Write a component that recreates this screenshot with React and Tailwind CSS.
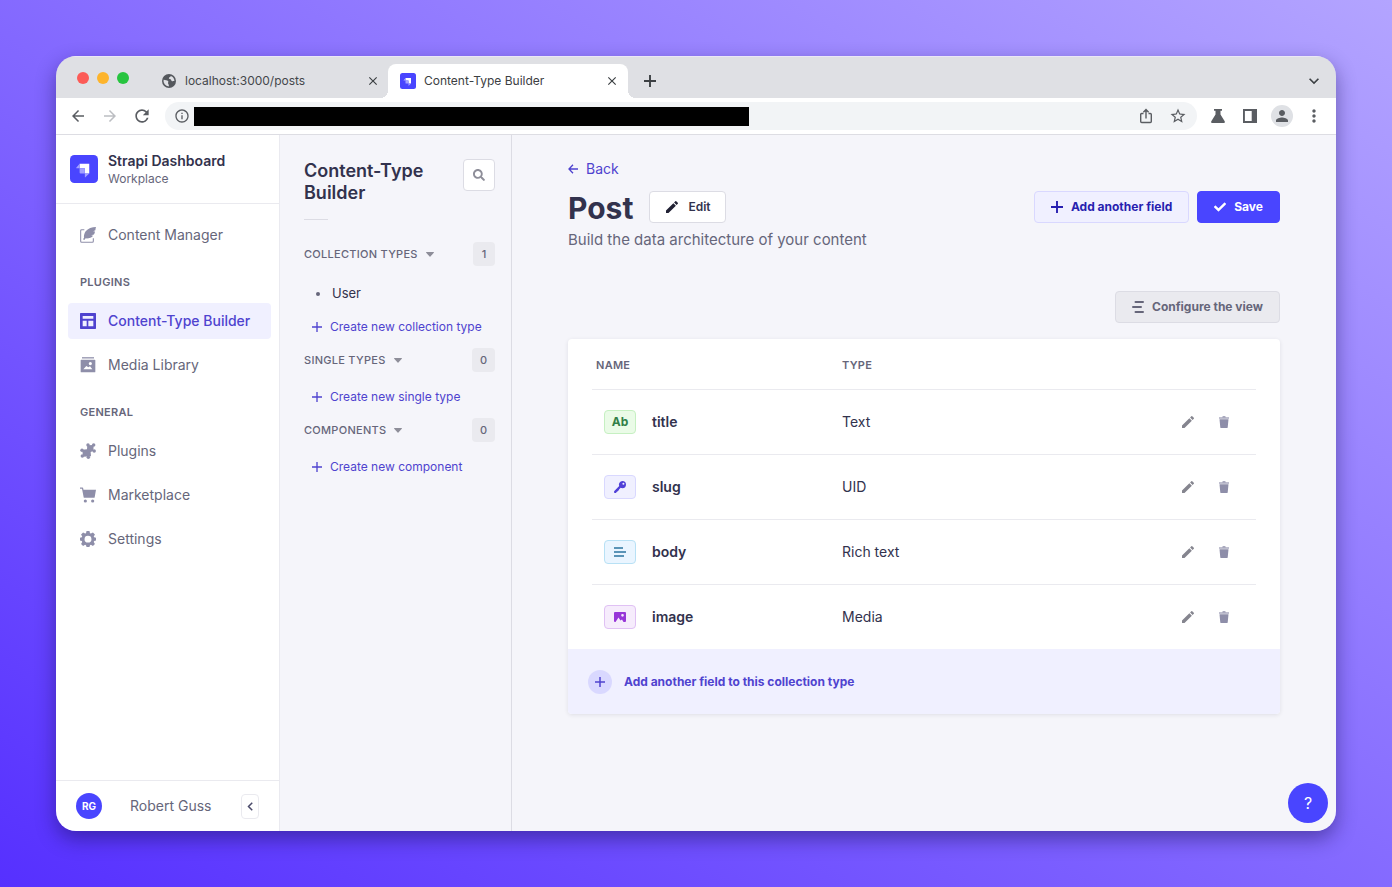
import React from "react";
import {
  MdArrowBack,
  MdArrowForward,
  MdRefresh,
  MdInfoOutline,
  MdStarBorder,
  MdPerson,
  MdMoreVert,
  MdEdit,
  MdClose,
  MdExpandMore,
} from "react-icons/md";
import { FaCheck, FaSearch } from "react-icons/fa";

function StrapiLogo({ className }) {
  return (
    <svg viewBox="0 0 32 32" className={className} aria-hidden="true">
      <rect width="32" height="32" rx="5" fill="#4945ff" />
      <path d="M11 10h11v11h-5v-5.500a.5.500 0 0 0-.5-.5H11z" fill="#fff" />
      <path d="M11 10v5H7.300a.3.300 0 0 1-.2-.5z" fill="#a3a1ff" />
      <path d="M11 15h5.500a.5.500 0 0 1 .5.500V21h-5a1 1 0 0 1-1-1z" fill="#a3a1ff" />
      <path d="M17 21h5l-4.500 4.500a.3.300 0 0 1-.5-.2z" fill="#a3a1ff" />
    </svg>
  );
}

function GlobeIcon() {
  return (
    <svg viewBox="0 0 16 16" className="size-4 text-[#55585d]" aria-hidden="true">
      <circle cx="8" cy="8" r="7" fill="currentColor" />
      <path d="M2.600 6.800c1.800.2 3.600.3 4.600 1.500.5.8-.3 1.300-.2 2 .1.900 1.200 1.200.8 3.100A5.500 5.500 0 0 1 2.600 6.800z" fill="#dfe0e4" />
      <path d="M9.800 2.900c-.3 1.200-1.600 1-1.900 1.900-.3.800.5 1.300 1.500 1.500.9.300.7 1.500 1.600 1.900.8.300 1.700-.2 2.400-.1a5.500 5.500 0 0 0-3.600-5.200z" fill="#dfe0e4" />
    </svg>
  );
}

function FeatherIcon() {
  return (
    <svg viewBox="0 0 24 24" className="size-4" fill="currentColor" aria-hidden="true">
      <path d="M24 0c-6 .3-12 2-15.500 6.500C6.500 9.500 5.500 13 6 16l-1.500 2.500 2 1L8.500 17c4.500.4 9-1 11.200-4l-3-.6 4.300-1.200c.8-1.500 1.300-3 1.500-4.400l-2.800-.4 3.400-1.400C23 3.500 23.500 1.700 24 0z" />
      <path d="M6.500 4H2.500A1.500 1.500 0 0 0 1 5.500v16A1.500 1.500 0 0 0 2.500 23h16a1.500 1.500 0 0 0 1.500-1.500V17" fill="none" stroke="currentColor" strokeWidth="1.600" />
    </svg>
  );
}

function LayoutIcon() {
  return (
    <svg viewBox="0 0 24 24" className="size-4" aria-hidden="true">
      <path fillRule="evenodd" fill="currentColor" d="M1 0h22a1 1 0 0 1 1 1v22a1 1 0 0 1-1 1H1a1 1 0 0 1-1-1V1a1 1 0 0 1 1-1zm3 4.500v4.200h16V4.500zm0 7.200V20h6v-8.300zm8.500 0V20H20v-8.300z" />
    </svg>
  );
}

function LibraryIcon() {
  return (
    <svg viewBox="0 0 24 24" className="size-4" aria-hidden="true">
      <path fill="currentColor" d="M3 .3h18v1.900H3z" />
      <path fillRule="evenodd" fill="currentColor" d="M2 4h20a1 1 0 0 1 1 1v17a1 1 0 0 1-1 1H2a1 1 0 0 1-1-1V5a1 1 0 0 1 1-1zM15.500 7.500a2.400 2.400 0 1 0 0 4.800 2.400 2.400 0 0 0 0-4.800zM5 18.500h13.500L15 14l-2.500 1.500-3-2z" />
    </svg>
  );
}

function PuzzleIcon() {
  return (
    <svg viewBox="0 0 24 24" className="size-4" fill="currentColor" aria-hidden="true">
      <path d="M11 3.500 20.500 3l-.5 9-4 1.500.5 6.500-11.500.5L4 16l-.5-6 7-.5z" />
      <circle cx="12" cy="3" r="2.600" />
      <circle cx="20.500" cy="3" r="2.600" />
      <circle cx="21.300" cy="12" r="2.600" />
      <circle cx="3" cy="11" r="2.600" />
      <circle cx="3.500" cy="19.500" r="2.600" />
      <circle cx="12.500" cy="21.300" r="2.600" />
    </svg>
  );
}

function CartIcon() {
  return (
    <svg viewBox="0 0 24 24" className="size-4" fill="currentColor" aria-hidden="true">
      <path d="M0 .8h3.700a1 1 0 0 1 1 .8L5.200 4H24l-2 11.500a1 1 0 0 1-1 .8H6.500a1 1 0 0 1-1-.8L3 2.800H0z" />
      <circle cx="8" cy="21" r="2.400" />
      <circle cx="19" cy="21" r="2.400" />
    </svg>
  );
}

function CogIcon() {
  return (
    <svg viewBox="0 0 24 24" className="size-4" aria-hidden="true">
      <path fillRule="evenodd" fill="currentColor" d="M9.800 0h4.400l.8 3.300 1.400.6 3-1.800 3 3-1.800 3 .6 1.300 2.800.8v4l-2.800.9-.6 1.400 1.800 3-3 3-3-1.800-1.400.6-.8 2.700H9.800L9 21.300l-1.400-.6-3 1.800-3-3 1.700-3-.5-1.400-2.800-.9v-4l2.800-.8.5-1.300-1.700-3 3-3 3 1.800L9 3.300zM12 7a5.200 5.200 0 1 0 0 10.400A5.200 5.200 0 0 0 12 7z" />
    </svg>
  );
}

function TrashIcon() {
  return (
    <svg viewBox="0 0 24 24" className="size-3" fill="currentColor" aria-hidden="true">
      <path d="M2 2.500h6.500L9.500 0h5l1 2.500H22v3H2z" opacity=".75" />
      <path d="M3 6.500h18l-1.600 16.500a1 1 0 0 1-1 .9H5.600a1 1 0 0 1-1-.9z" />
    </svg>
  );
}

function KeyIcon() {
  return (
    <svg viewBox="0 0 24 24" className="size-3" aria-hidden="true">
      <path fillRule="evenodd" fill="currentColor" d="M16.800 0a7.200 7.200 0 0 1 0 14.400c-1.300 0-2.400-.3-3.400-.9L10 17l.3 1.400-2 .5-.3 1.700-1.800.3-2 2.500c-1.200 1-3.200.7-4-.5v-2.300L10.400 10A7.200 7.200 0 0 1 16.800 0zm2 3.300a2 2 0 1 0 0 4 2 2 0 0 0 0-4z" />
    </svg>
  );
}

function ParagraphIcon() {
  return (
    <svg viewBox="0 0 24 24" className="size-3" fill="none" stroke="currentColor" strokeWidth="3.400" aria-hidden="true">
      <path d="M0 4h18M0 12h24M0 20h20" />
    </svg>
  );
}

function PictureIcon() {
  return (
    <svg viewBox="0 0 24 24" className="size-3" aria-hidden="true">
      <path fillRule="evenodd" fill="currentColor" d="M2 2h20a2 2 0 0 1 2 2v16a2 2 0 0 1-2 2h-3l-3-5-3 2-4-6-6 9H2a2 2 0 0 1-2-2V4a2 2 0 0 1 2-2zm15 4a2.700 2.700 0 1 0 0 5.400A2.700 2.700 0 0 0 17 6z" />
    </svg>
  );
}

function ConfigureIcon() {
  return (
    <svg viewBox="0 0 12 12" className="size-3" fill="none" stroke="currentColor" strokeWidth="2" strokeLinecap="round" aria-hidden="true">
      <path d="M3.500 1H11M1 6h8M3.500 11H11" />
    </svg>
  );
}

function Plus({ className, weight }) {
  return (
    <svg viewBox="0 0 12 12" className={className} fill="none" stroke="currentColor" strokeWidth={weight} aria-hidden="true">
      <path d="M6 0v12M0 6h12" />
    </svg>
  );
}

function CaretIcon() {
  return (
    <svg viewBox="0 0 8 5" className="h-[5px] w-2 text-[#8e8e99]" fill="currentColor" aria-hidden="true">
      <path d="M.5 0h7a.4.400 0 0 1 .3.700L4.400 4.600a.5.500 0 0 1-.8 0L.2.700A.4.400 0 0 1 .5 0z" />
    </svg>
  );
}

function BackArrow() {
  return (
    <svg viewBox="0 0 12 12" className="size-[10px]" fill="none" stroke="currentColor" strokeWidth="1.600" aria-hidden="true">
      <path d="M12 6H1.500M6 1 1.200 6 6 11" />
    </svg>
  );
}

function ShareIcon() {
  return (
    <svg viewBox="0 0 16 16" className="size-4" fill="none" stroke="currentColor" strokeWidth="1.400" aria-hidden="true">
      <path d="M5.500 5.500H3.700a1 1 0 0 0-1 1v7a1 1 0 0 0 1 1h8.600a1 1 0 0 0 1-1v-7a1 1 0 0 0-1-1h-1.800M8 10.500V1.800M5.400 4.200 8 1.600l2.600 2.600" />
    </svg>
  );
}

function FlaskIcon() {
  return (
    <svg viewBox="0 0 16 16" className="size-4" fill="currentColor" aria-hidden="true">
      <path d="M4 1h8v1.800h-1.500V6.500l4.200 6.700c.5 1-.1 1.800-1 1.800H2.300c-.9 0-1.500-.8-1-1.800l4.200-6.700V2.800H4z" />
    </svg>
  );
}

function SidePanelIcon() {
  return (
    <svg viewBox="0 0 16 16" className="size-4" aria-hidden="true">
      <path fillRule="evenodd" fill="currentColor" d="M1 1h14v14H1zm1.900 1.900v10.200h6.800V2.900z" />
    </svg>
  );
}

function ChevronLeftIcon() {
  return (
    <svg viewBox="0 0 8 12" className="h-[9px] w-[6px]" fill="none" stroke="currentColor" strokeWidth="2" aria-hidden="true">
      <path d="M7 1 2 6l5 5" />
    </svg>
  );
}

function BrowserTabs() {
  return (
    <div className="flex h-[42px] items-end border-t border-[#ebe7f7] bg-[#dfe0e4] pr-3">
      <div className="flex h-[41px] w-[90px] items-center gap-2 pl-[21px]">
        <span className="size-3 rounded-full bg-[#fc5b57]" />
        <span className="size-3 rounded-full bg-[#fdb42c]" />
        <span className="size-3 rounded-full bg-[#27c43f]" />
      </div>
      <div className="flex h-[34px] w-[242px] items-center pr-2 pl-[15px] text-xs text-[#44474b]">
        <GlobeIcon />
        <span className="ml-2 flex-1">localhost:3000/posts</span>
        <button type="button" aria-label="Close tab" className="text-[#3c4043]">
          <MdClose className="size-[14px]" />
        </button>
      </div>
      <div className="relative flex h-[34px] w-[240px] items-center rounded-t-lg bg-white pr-[9px] pl-3 text-xs text-[#3c4043]">
        <span className="absolute bottom-0 -left-2 size-2 bg-[radial-gradient(circle_at_0_0,transparent_8px,white_8px)]" />
        <span className="absolute -right-2 bottom-0 size-2 bg-[radial-gradient(circle_at_100%_0,transparent_8px,white_8px)]" />
        <StrapiLogo className="size-4" />
        <span className="ml-2 flex-1">Content-Type Builder</span>
        <button type="button" aria-label="Close tab">
          <MdClose className="size-[14px]" />
        </button>
      </div>
      <button type="button" aria-label="New tab" className="flex h-[34px] w-11 items-center justify-center text-[#3c4043]">
        <Plus className="size-3" weight="1.900" />
      </button>
      <button type="button" aria-label="Search tabs" className="ml-auto flex h-[34px] items-center text-[#3c4043]">
        <MdExpandMore className="size-5" />
      </button>
    </div>
  );
}

function AddressBar() {
  return (
    <div className="flex h-[37px] items-center border-b border-[#dddde3] bg-white pr-[14px] pl-3 text-[#5a5d62]">
      <div className="flex w-[97px] items-center gap-3">
        <button type="button" aria-label="Back">
          <MdArrowBack className="size-5 p-px" />
        </button>
        <button type="button" aria-label="Forward" className="text-[#bcbec2]">
          <MdArrowForward className="size-5 p-px" />
        </button>
        <button type="button" aria-label="Reload">
          <MdRefresh className="size-5" />
        </button>
      </div>
      <div className="flex h-7 flex-1 items-center rounded-full bg-[#f2f4f6] pr-[10px] pl-[9px]">
        <MdInfoOutline className="size-4" />
        <input
          type="text"
          aria-label="Address"
          className="ml-1 h-[19px] w-[555px] min-w-0 bg-black px-1 text-xs text-black outline-none"
        />
        <div className="ml-auto flex items-center gap-[15px]">
          <button type="button" aria-label="Share">
            <ShareIcon />
          </button>
          <button type="button" aria-label="Bookmark">
            <MdStarBorder className="size-[18px]" />
          </button>
        </div>
      </div>
      <div className="ml-[13px] flex items-center gap-4">
        <button type="button" aria-label="Labs">
          <FlaskIcon />
        </button>
        <button type="button" aria-label="Side panel">
          <SidePanelIcon />
        </button>
        <button type="button" aria-label="Profile" className="-mx-[3px] flex size-[22px] items-center justify-center rounded-full bg-[#dfe1e5]">
          <MdPerson className="size-[18px]" />
        </button>
        <button type="button" aria-label="Menu" className="-mx-[2px]">
          <MdMoreVert className="size-5" />
        </button>
      </div>
    </div>
  );
}

function NavItem({ icon, children, active }) {
  return (
    <a
      href="#"
      aria-current={active ? "page" : undefined}
      className={
        active
          ? "flex h-9 items-center gap-3 rounded bg-[#f0f0ff] px-3 font-medium text-[#4f43cf]"
          : "flex h-9 items-center gap-3 px-3 text-[#66667a]"
      }
    >
      <span className={active ? "text-[#4f43cf]" : "text-[#8e8ea9]"}>{icon}</span>
      {children}
    </a>
  );
}

function NavLabel({ children }) {
  return <h2 className="pt-5 pr-3 pb-3 pl-3 text-[11px] leading-[18px] font-semibold tracking-wide text-[#66667a]">{children}</h2>;
}

function Sidebar() {
  return (
    <aside className="flex w-56 shrink-0 flex-col border-r border-[#eaeaf0] bg-white">
      <div className="flex h-[69px] items-center gap-[10px] border-b border-[#eaeaef] pl-[14px]">
        <StrapiLogo className="size-[28px]" />
        <div>
          <p className="text-sm leading-5 font-semibold text-[#32324d]">Strapi Dashboard</p>
          <p className="text-xs leading-4 text-[#66667a]">Workplace</p>
        </div>
      </div>
      <nav className="flex-1 pt-[13px] pr-2 pl-3 text-sm">
        <NavItem icon={<FeatherIcon />}>Content Manager</NavItem>
        <NavLabel>PLUGINS</NavLabel>
        <div className="flex flex-col gap-2">
          <NavItem icon={<LayoutIcon />} active>
            Content-Type Builder
          </NavItem>
          <NavItem icon={<LibraryIcon />}>Media Library</NavItem>
        </div>
        <NavLabel>GENERAL</NavLabel>
        <div className="flex flex-col gap-2">
          <NavItem icon={<PuzzleIcon />}>Plugins</NavItem>
          <NavItem icon={<CartIcon />}>Marketplace</NavItem>
          <NavItem icon={<CogIcon />}>Settings</NavItem>
        </div>
      </nav>
      <div className="flex h-[51px] items-center border-t border-[#eaeaef] pr-5 pl-5">
        <span className="flex size-[26px] items-center justify-center rounded-full bg-[#4945ff] text-[10px] font-bold text-white">RG</span>
        <span className="ml-7 flex-1 text-sm text-[#66667a]">Robert Guss</span>
        <button type="button" aria-label="Collapse navigation" className="flex h-[25px] w-[18px] items-center justify-center rounded-sm border border-[#eaeaef] bg-white text-[#4a4a6a]">
          <ChevronLeftIcon />
        </button>
      </div>
    </aside>
  );
}

function TypeGroup({ title, count, action, items }) {
  return (
    <section>
      <div className="flex h-6 items-center">
        <button type="button" className="flex items-center gap-2 text-[11px] font-medium tracking-wide text-[#66667a]">
          <span>{title}</span>
          <CaretIcon />
        </button>
        <span className="ml-auto flex h-6 min-w-[22px] items-center justify-center rounded bg-[#eaeaef] px-2 text-[11px] font-medium text-[#66667a]">
          {count}
        </span>
      </div>
      {items.map((item) => (
        <a key={item} href="#" className="mt-[14px] -mb-[6px] flex h-7 items-center gap-3 pl-3 text-[13px] text-[#32324d]">
          <span className="size-1 rounded-full bg-[#66667a]" />
          {item}
        </a>
      ))}
      <button type="button" className="mt-[13px] mb-[9px] flex h-6 items-center gap-2 pl-2 text-xs text-[#4f43cf]">
        <Plus className="size-[10px]" weight="1.600" />
        {action}
      </button>
    </section>
  );
}

function TypesPanel() {
  return (
    <aside className="w-[232px] shrink-0 border-r border-[#dcdce4] bg-[#f5f5fa] pt-6 pr-4 pl-6">
      <div className="flex items-start justify-between">
        <h2 className="w-32 pt-px text-lg leading-[22px] font-semibold text-[#32324d]">Content-Type Builder</h2>
        <button type="button" aria-label="Search" className="flex size-8 items-center justify-center rounded border border-[#dcdce4] bg-white text-[#8e8e99]">
          <FaSearch className="size-3" />
        </button>
      </div>
      <div className="mt-[15px] mb-[22px] h-px w-6 bg-[#dcdce4]" />
      <TypeGroup title="COLLECTION TYPES" count="1" action="Create new collection type" items={["User"]} />
      <TypeGroup title="SINGLE TYPES" count="0" action="Create new single type" items={[]} />
      <TypeGroup title="COMPONENTS" count="0" action="Create new component" items={[]} />
    </aside>
  );
}

const FIELDS = [
  { name: "title", type: "Text", icon: "Ab", style: "border-[#c6f0c2] bg-[#eafbe7] text-[#328048]" },
  { name: "slug", type: "UID", icon: <KeyIcon />, style: "border-[#d9d8ff] bg-[#f0f0ff] text-[#5040d8]" },
  { name: "body", type: "Rich text", icon: <ParagraphIcon />, style: "border-[#b8e1f5] bg-[#eaf5ff] text-[#2b74a0]" },
  { name: "image", type: "Media", icon: <PictureIcon />, style: "border-[#e0c1f4] bg-[#f6ecfc] text-[#9736d8]" },
];

function FieldsCard() {
  return (
    <div className="mt-4 overflow-hidden rounded bg-white shadow-[0_1px_4px_rgba(33,33,52,0.1)]">
      <div className="px-6">
        <table className="w-full text-left text-sm text-[#32324d]">
          <thead>
            <tr className="h-[50px] text-[11px] tracking-wide text-[#66667a]">
              <th scope="col" className="w-[250px] pt-1 pl-1 font-semibold">
                NAME
              </th>
              <th scope="col" className="pt-1 font-semibold">
                TYPE
              </th>
              <th scope="col" aria-label="Actions" />
            </tr>
          </thead>
          <tbody>
            {FIELDS.map((field) => (
              <tr key={field.name} className="h-[65px] border-t border-[#eaeaef]">
                <td className="pl-3">
                  <div className="flex items-center gap-4">
                    <span className={`flex h-6 w-8 items-center justify-center rounded-sm border text-xs font-bold ${field.style}`}>
                      {field.icon}
                    </span>
                    <span className="font-semibold">{field.name}</span>
                  </div>
                </td>
                <td>{field.type}</td>
                <td className="pr-5">
                  <div className="flex justify-end gap-3">
                    <button type="button" aria-label={`Edit ${field.name}`} className="flex size-6 items-center justify-center text-[#85858f]">
                      <MdEdit className="size-4" />
                    </button>
                    <button type="button" aria-label={`Delete ${field.name}`} className="flex size-6 items-center justify-center text-[#8e8ea9]">
                      <TrashIcon />
                    </button>
                  </div>
                </td>
              </tr>
            ))}
          </tbody>
        </table>
      </div>
      <button type="button" className="flex h-[65px] w-full items-center gap-3 bg-[#f0f0ff] px-5 pt-px text-xs font-bold text-[#4f43cf]">
        <span className="flex size-6 items-center justify-center rounded-full bg-[#d9d8ff]">
          <Plus className="size-[10px]" weight="1.800" />
        </span>
        Add another field to this collection type
      </button>
    </div>
  );
}

function Content() {
  return (
    <main className="relative min-w-0 flex-1 bg-[#f5f5fa] px-14 pt-6">
      <a href="#" className="flex h-5 w-fit items-center gap-2 text-sm text-[#4f43cf]">
        <BackArrow />
        Back
      </a>
      <div className="mt-3 flex h-8 items-center">
        <h1 className="pt-[2px] text-[30px] leading-8 font-bold text-[#32324d]">Post</h1>
        <button type="button" className="ml-4 flex h-8 items-center gap-2 rounded border border-[#dcdce4] bg-white px-[14px] text-xs font-semibold text-[#32324d]">
          <MdEdit className="size-4 text-[#212134]" />
          Edit
        </button>
        <div className="ml-auto flex gap-2 text-xs font-bold">
          <button type="button" className="flex h-8 items-center gap-2 rounded border border-[#d9d8ff] bg-[#f0f0ff] px-4 text-[#271fb0]">
            <Plus className="size-3" weight="1.900" />
            Add another field
          </button>
          <button type="button" className="flex h-8 items-center gap-2 rounded border border-[#4945ff] bg-[#4945ff] px-4 text-white">
            <FaCheck className="size-3" />
            Save
          </button>
        </div>
      </div>
      <p className="mt-[5px] text-[15px] leading-6 text-[#66667a]">Build the data architecture of your content</p>
      <div className="mt-[39px] flex justify-end">
        <button type="button" className="flex h-8 items-center gap-2 rounded border border-[#dcdce4] bg-[#eaeaef] px-4 text-xs font-bold text-[#66667a]">
          <ConfigureIcon />
          Configure the view
        </button>
      </div>
      <FieldsCard />
      <button type="button" aria-label="Help" className="absolute right-2 bottom-2 flex size-10 items-center justify-center rounded-full bg-[#4945ff] text-base text-white">
        ?
      </button>
    </main>
  );
}

export default function App() {
  return (
    <div className="flex min-h-screen bg-linear-to-tr/srgb from-[#5630ff] to-[#b3a4ff] p-14 font-['Inter','Liberation_Sans',sans-serif]">
      <div className="flex min-w-0 flex-1 flex-col overflow-hidden rounded-[20px] shadow-[0_8px_20px_rgba(20,10,80,0.45)]">
        <BrowserTabs />
        <AddressBar />
        <div className="flex flex-1">
          <Sidebar />
          <TypesPanel />
          <Content />
        </div>
      </div>
    </div>
  );
}
